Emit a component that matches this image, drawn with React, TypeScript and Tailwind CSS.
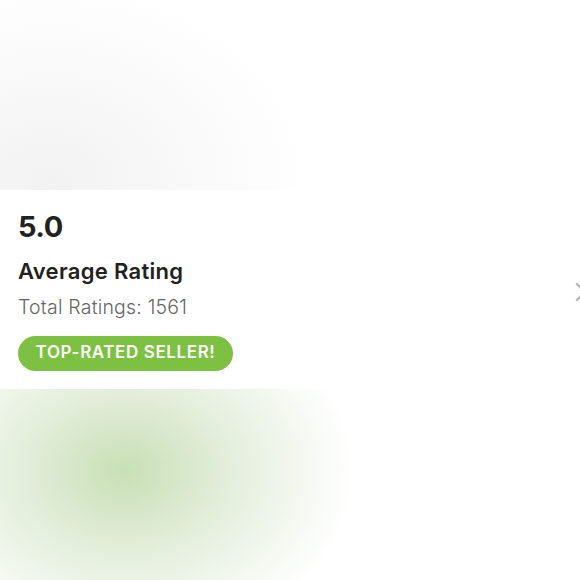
export default function App() {
  return (
    <div className="relative flex h-[580px] w-[580px] flex-col overflow-hidden bg-white font-['Inter','Noto_Sans',sans-serif]">
      <div className="h-[190px] bg-[radial-gradient(ellipse_260px_200px_at_50px_180px,#f2f2f2,#f8f8f8_45%,#ffffff_100%)]" />
      <section className="flex h-[199px] flex-col items-start bg-white pl-[18px] pt-[22px]">
        <div className="text-[29px] font-bold leading-none tracking-[-0.5px] text-[#222]">5.0</div>
        <div className="mt-[19px] text-[22px] font-semibold leading-none tracking-[0.3px] text-[#222]">
          Average Rating
        </div>
        <div className="mt-[16px] text-[19.5px] font-light leading-none tracking-[0.2px] text-[#666]">
          Total Ratings: 1561
        </div>
        <div className="mt-[18px] flex h-[35px] w-[215px] items-center justify-center rounded-full bg-[#7dc142] text-[17px] font-semibold tracking-[0.6px] text-white">
          TOP-RATED SELLER!
        </div>
      </section>
      <div className="flex-1 bg-[radial-gradient(ellipse_230px_180px_at_125px_82px,#c8dfb5,#e3eedb_45%,#ffffff_100%)]" />
      <svg
        className="absolute right-[-8px] top-[282px]"
        width="14"
        height="20"
        viewBox="0 0 14 20"
        fill="none"
        stroke="#bdbdbd"
        strokeWidth="2.5"
        strokeLinecap="round"
      >
        <path d="M3 2l8 8-8 8" />
      </svg>
    </div>
  );
}
